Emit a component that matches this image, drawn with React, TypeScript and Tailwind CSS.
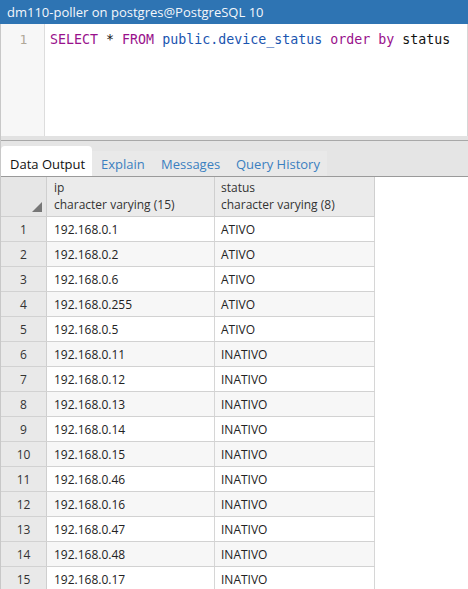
import React from "react";

const rows: [string, string][] = [
  ["192.168.0.1", "ATIVO"],
  ["192.168.0.2", "ATIVO"],
  ["192.168.0.6", "ATIVO"],
  ["192.168.0.255", "ATIVO"],
  ["192.168.0.5", "ATIVO"],
  ["192.168.0.11", "INATIVO"],
  ["192.168.0.12", "INATIVO"],
  ["192.168.0.13", "INATIVO"],
  ["192.168.0.14", "INATIVO"],
  ["192.168.0.15", "INATIVO"],
  ["192.168.0.46", "INATIVO"],
  ["192.168.0.16", "INATIVO"],
  ["192.168.0.47", "INATIVO"],
  ["192.168.0.48", "INATIVO"],
  ["192.168.0.17", "INATIVO"],
];

export default function App() {
  return (
    <div
      className="w-[468px] h-[589px] overflow-hidden bg-white flex flex-col"
      style={{ fontFamily: '"Open Sans", "Liberation Sans", sans-serif' }}
    >
      <div className="h-[24px] shrink-0 bg-[#2e74b3] text-[#f4f7fb] text-[13px] leading-[24px] pl-[7px]">
        dm110-poller on postgres@PostgreSQL 10
      </div>
      <div className="flex-1 flex flex-col border-l border-[#c8c8c8] min-h-0">
        <div className="h-[112px] shrink-0 flex border-r border-[#d6d6d6]">
          <div className="w-[44px] shrink-0 bg-[#f7f7f7] border-r border-[#dddddd] text-center text-[13px] leading-[16px] pt-[8px] pl-[2px] text-[#b0a898]" style={{ fontFamily: '"DejaVu Sans Mono", monospace' }}>
            1
          </div>
          <div
            className="pl-[5px] pt-[8px] text-[13.3px] leading-[16px] text-[#111] whitespace-pre"
            style={{ fontFamily: '"DejaVu Sans Mono", "Liberation Mono", monospace' }}
          >
            <span className="text-[#99118c]">SELECT</span> * <span className="text-[#99118c]">FROM</span>{" "}
            <span className="text-[#1a55b0]">public.device_status</span> <span className="text-[#99118c]">order</span>{" "}
            <span className="text-[#99118c]">by</span> status
          </div>
        </div>
        <div className="h-[4px] shrink-0 bg-[#e2e2e2]" />
        <div className="h-[37px] shrink-0 bg-[#e5e5e5] border-t border-[#a8a8a8] border-b border-b-[#9a9a9a] flex items-end text-[13px]">
          <div className="w-[91px] h-[30px] bg-white rounded-t-[4px] pl-[9px] pt-[6px] leading-[24px] text-[#111]">
            Data Output
          </div>
          <div className="w-[60px] h-[25px] bg-[#e9e9e9] pl-[9px] pt-[1px] leading-[24px] text-[#3b7fc0]">Explain</div>
          <div className="w-[75px] h-[25px] bg-[#e9e9e9] pl-[9px] pt-[1px] leading-[24px] text-[#3b7fc0]">Messages</div>
          <div className="w-[100px] h-[25px] bg-[#e9e9e9] pl-[9px] pt-[1px] leading-[24px] text-[#3b7fc0]">Query History</div>
        </div>
        <div className="flex text-[12px] text-[#222]">
          <div className="flex flex-col">
            <div className="flex h-[40px] border-b border-[#cfcfcf]">
              <div className="w-[46px] bg-[#e6e6e6] border-r border-[#cfcfcf] relative">
                <svg className="absolute right-[4px] bottom-[4px]" width="10" height="10" viewBox="0 0 10 10">
                  <polygon points="10,0 10,10 0,10" fill="#777" />
                </svg>
              </div>
              <div className="w-[168px] bg-[#ebebeb] border-r border-[#cfcfcf] pl-[7px] pt-[2px] leading-[17px] text-[#333]">
                <div>ip</div>
                <div>character varying (15)</div>
              </div>
              <div className="w-[160px] bg-[#ebebeb] border-r border-[#cfcfcf] pl-[6px] pt-[2px] leading-[17px] text-[#333]">
                <div>status</div>
                <div>character varying (8)</div>
              </div>
            </div>
            {rows.map(([ip, st], i) => (
              <div
                key={i}
                className={`flex h-[25px] border-b border-[#d2d2d2] pt-[1px] leading-[23px] ${i % 2 === 1 ? "bg-[#f7f7f7]" : "bg-white"}`}
              >
                <div className="w-[46px] bg-[#e9e9e9] border-r border-[#cfcfcf] text-center text-[#333] -mt-[1px] pt-[1px]">{i + 1}</div>
                <div className="w-[168px] border-r border-[#d6d6d6] pl-[7px] -mt-[1px] pt-[1px]">{ip}</div>
                <div className="w-[160px] border-r border-[#d6d6d6] pl-[6px] -mt-[1px] pt-[1px]">{st}</div>
              </div>
            ))}
          </div>
        </div>
      </div>
    </div>
  );
}
